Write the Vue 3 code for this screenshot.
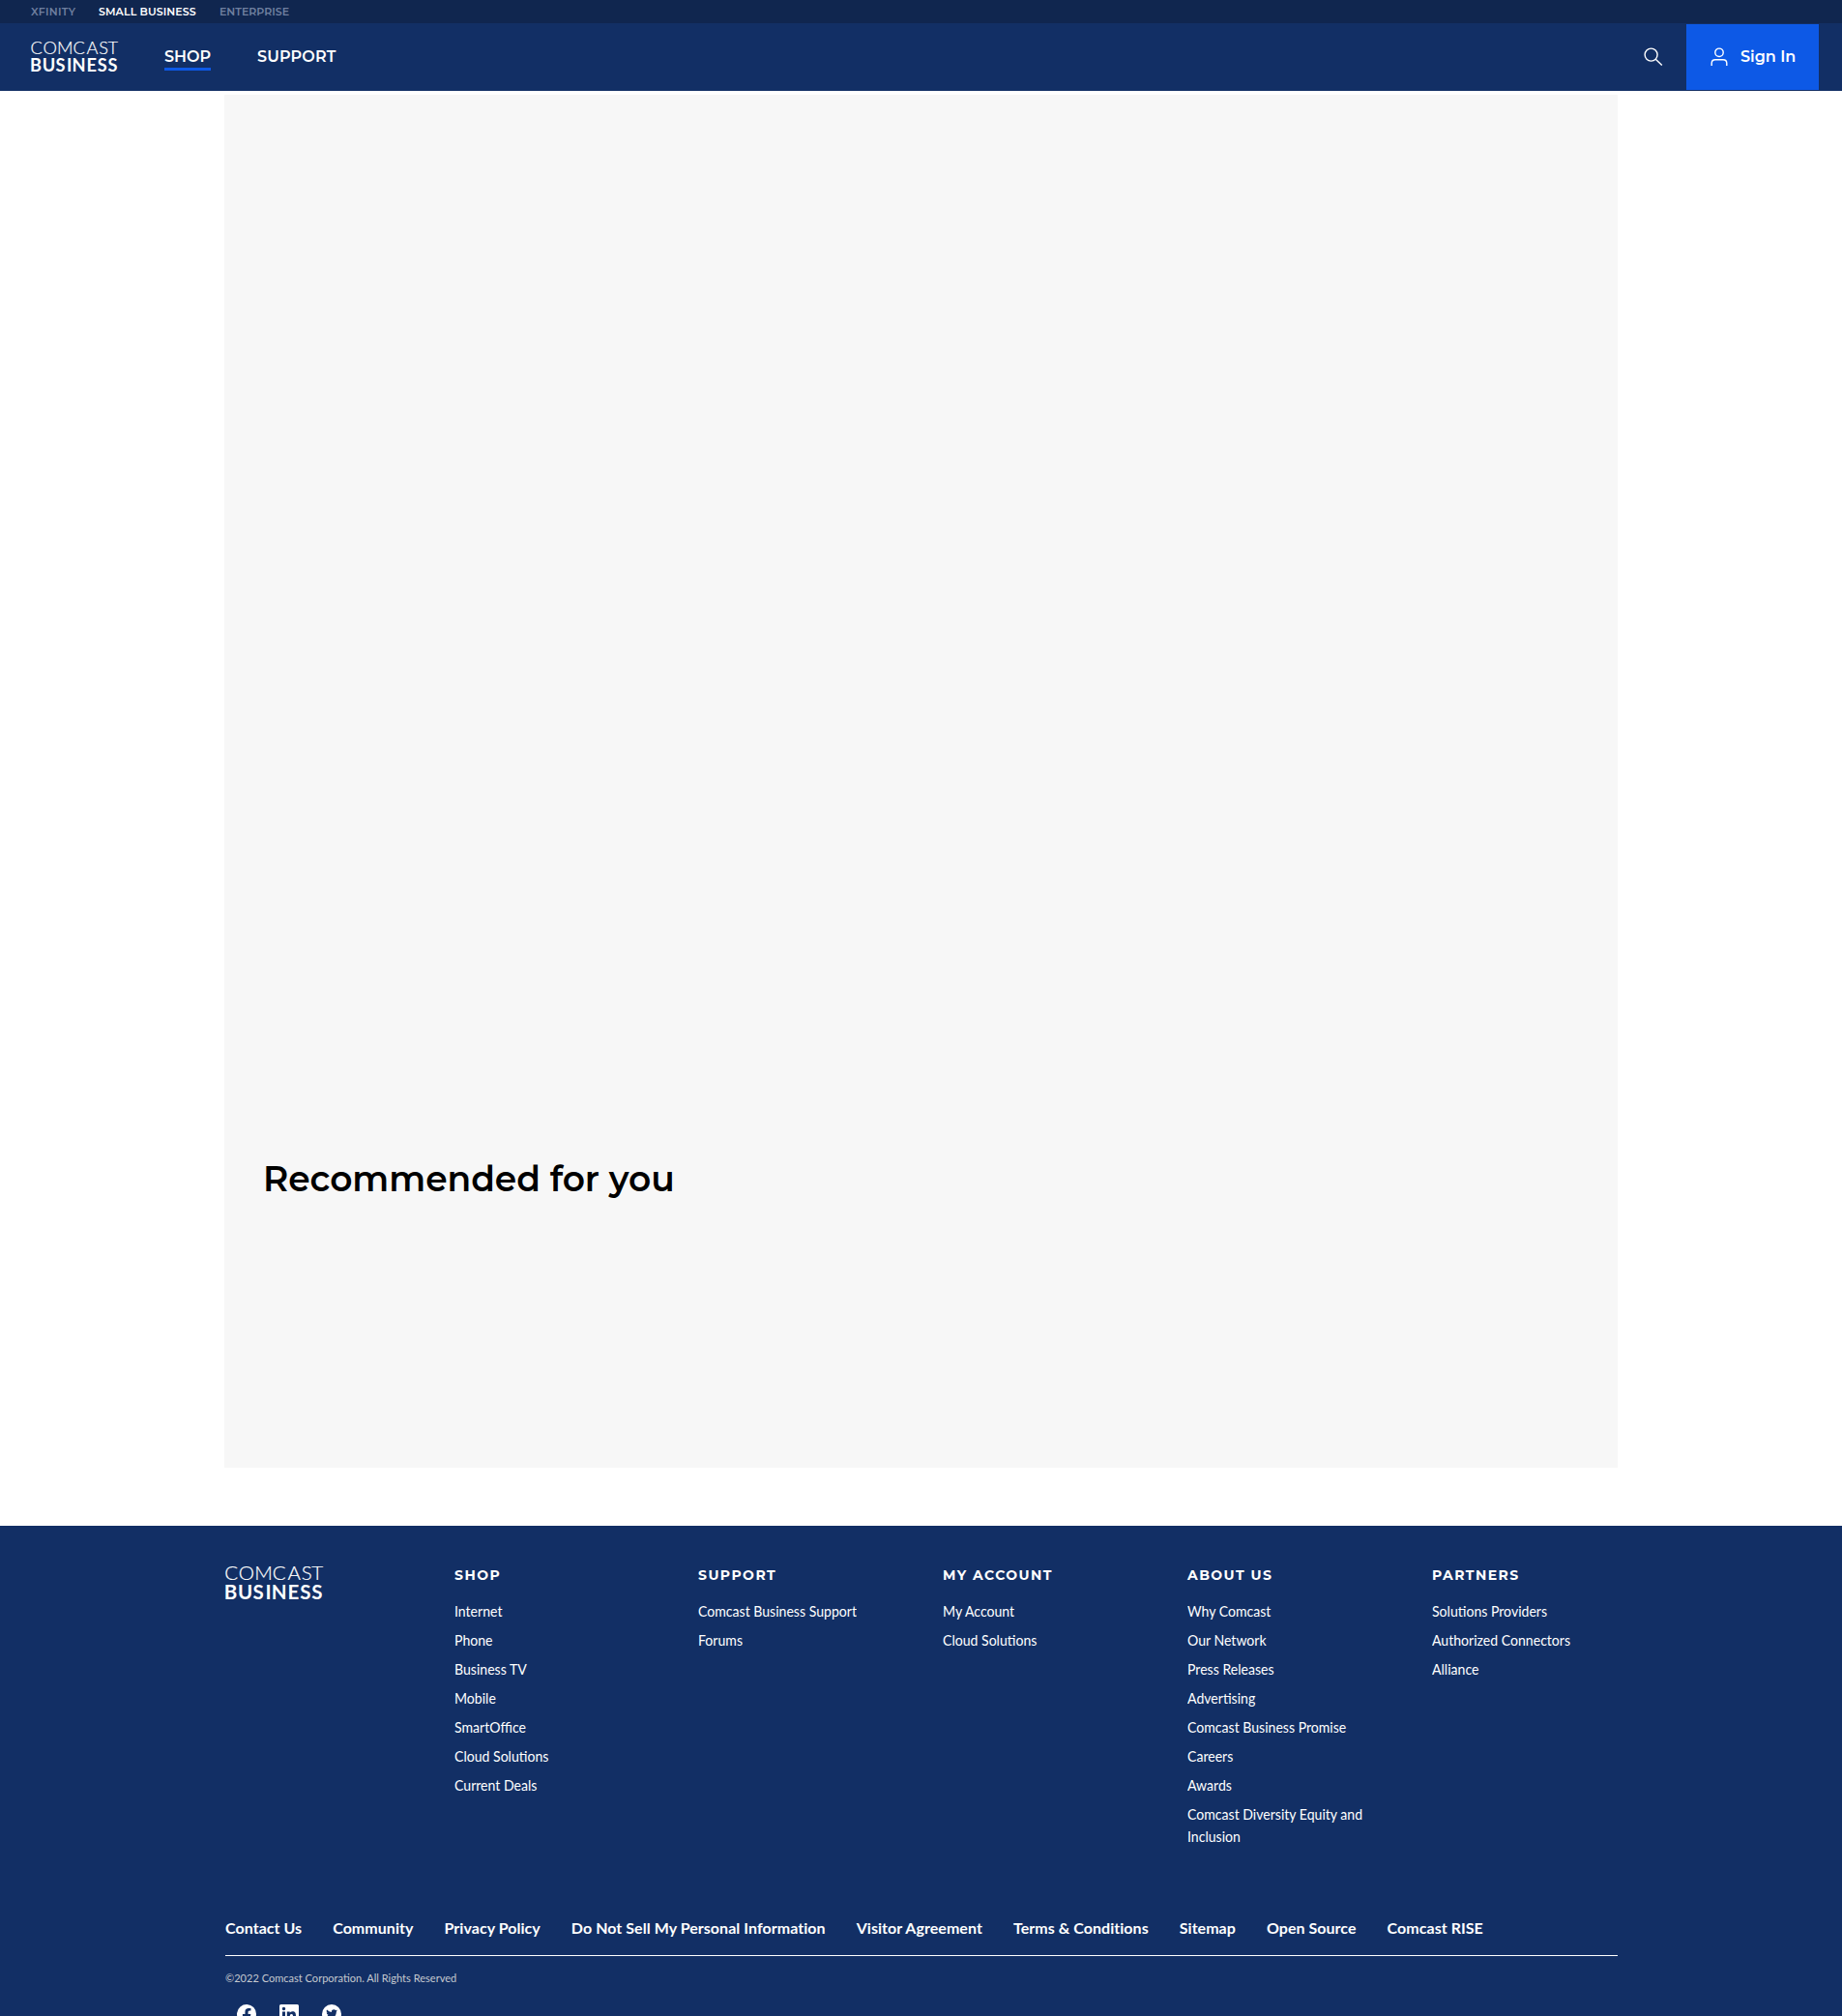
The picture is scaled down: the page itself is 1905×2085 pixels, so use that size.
<script setup>
const sites = [
  { label: 'XFINITY', cls: 's1' },
  { label: 'SMALL BUSINESS', cls: 's2 active' },
  { label: 'ENTERPRISE', cls: 's3' },
]
const columns = [
  { title: 'SHOP', links: ['Internet', 'Phone', 'Business TV', 'Mobile', 'SmartOffice', 'Cloud Solutions', 'Current Deals'] },
  { title: 'SUPPORT', links: ['Comcast Business Support', 'Forums'] },
  { title: 'MY ACCOUNT', links: ['My Account', 'Cloud Solutions'] },
  { title: 'ABOUT US', links: ['Why Comcast', 'Our Network', 'Press Releases', 'Advertising', 'Comcast Business Promise', 'Careers', 'Awards', 'Comcast Diversity Equity and Inclusion'] },
  { title: 'PARTNERS', links: ['Solutions Providers', 'Authorized Connectors', 'Alliance'] },
]
const legal = ['Contact Us', 'Community', 'Privacy Policy', 'Do Not Sell My Personal Information', 'Visitor Agreement', 'Terms & Conditions', 'Sitemap', 'Open Source', 'Comcast RISE']
</script>

<template>
  <div class="page">
    <div class="topbar">
      <a v-for="s in sites" :key="s.label" :class="s.cls">{{ s.label }}</a>
    </div>
    <header class="nav">
      <svg class="logo" viewBox="0 0 101 36" width="90" height="32">
        <text x="-0.8 13.8 30.2 48.800 64.500 78.800 89.200" y="15" class="thin">COMCAST</text>
        <text x="-1.2 13 28.600 41.600 47.800 64.600 77.300 89.200" y="35.2" class="bold">BUSINESS</text>
      </svg>
      <a class="item shop">SHOP</a>
      <a class="item support">SUPPORT</a>
      <svg class="search" viewBox="0 0 20 20" width="20" height="20">
        <circle cx="7.6" cy="7.6" r="6.5" />
        <path d="M12.3 12.3 18.8 18.6" />
      </svg>
      <a class="signin">
        <svg viewBox="0 0 18 20" width="18" height="20">
          <circle cx="9" cy="5.3" r="4.2" />
          <path d="M1.2 19v-2.600Q1.200 12.700 5 12.700h8q3.800 0 3.800 3.700V19" />
        </svg>
        <span>Sign In</span>
      </a>
    </header>
    <main class="content">
      <h2>Recommended for you</h2>
    </main>
    <footer class="footer">
      <div class="inner">
        <div class="columns">
          <svg class="logo" viewBox="0 0 101 36" width="101" height="36">
            <text x="-0.8 13.8 30.2 48.800 64.500 78.800 89.200" y="15" class="thin">COMCAST</text>
            <text x="-1.2 13 28.600 41.600 47.800 64.600 77.300 89.200" y="35.2" class="bold">BUSINESS</text>
          </svg>
          <section v-for="c in columns" :key="c.title">
            <h3>{{ c.title }}</h3>
            <a v-for="l in c.links" :key="l">{{ l }}</a>
          </section>
        </div>
        <nav class="legal">
          <a v-for="l in legal" :key="l">{{ l }}</a>
        </nav>
        <p class="copy">©2022 Comcast Corporation. All Rights Reserved</p>
        <div class="social">
          <svg viewBox="0 0 20 20" width="20" height="20">
            <path d="M20 10a10 10 0 1 0-11.56 9.88v-7H5.9V10h2.54V7.8c0-2.5 1.5-3.9 3.78-3.9 1.1 0 2.24.2 2.24.2v2.46H13.2c-1.24 0-1.63.77-1.63 1.56V10h2.77l-.44 2.9h-2.33v7A10 10 0 0 0 20 10Z" />
          </svg>
          <svg viewBox="0 0 20 20" width="20" height="20">
            <path fill-rule="evenodd" d="M1.5 0h17A1.5 1.5 0 0 1 20 1.5v17a1.5 1.5 0 0 1-1.5 1.5h-17A1.5 1.5 0 0 1 0 18.5v-17A1.5 1.5 0 0 1 1.5 0ZM3 7.5V17h3V7.5ZM4.5 2.75a1.73 1.73 0 1 0 0 3.46 1.73 1.73 0 0 0 0-3.46ZM7.8 7.5V17h3v-4.7c0-1.3.3-2.4 1.75-2.4S14 11.2 14 12.4V17h3v-5.2c0-2.6-.6-4.5-3.6-4.5-1.4 0-2.3.8-2.7 1.5V7.5Z" />
          </svg>
          <svg viewBox="0 0 20 20" width="20" height="20">
            <path fill-rule="evenodd" d="M10 0a10 10 0 1 0 0 20 10 10 0 0 0 0-20ZM14.8 7.6v.3c0 3.2-2.4 6.8-6.8 6.8-1.4 0-2.6-.4-3.7-1.1 1.3.1 2.5-.2 3.5-1a2.4 2.4 0 0 1-2.2-1.7h1.1a2.4 2.4 0 0 1-2-2.4l1.1.3a2.4 2.4 0 0 1-.7-3.2 6.8 6.8 0 0 0 4.9 2.5c-.4-1.7.8-2.9 2.3-2.9.7 0 1.3.3 1.7.8.5-.1 1.1-.3 1.5-.6-.2.6-.5 1-1 1.3.4 0 .9-.2 1.4-.4-.3.5-.7.9-1.1 1.3Z" />
          </svg>
        </div>
      </div>
    </footer>
  </div>
</template>

<style>
body { margin: 0; background: #fff; }
</style>

<style scoped>
.page {
  height: 2085px;
  overflow: hidden;
  font-family: Montserrat, Inter, sans-serif;
  color: #fff;
}
.topbar {
  height: 24px;
  box-sizing: border-box;
  padding-left: 32px;
  display: flex;
  background: #10264f;
  font-size: 11px;
  font-weight: 600;
  line-height: 24px;
  color: #6f7f9f;
  white-space: nowrap;
}
.s1 { width: 70px; letter-spacing: 0.3px; }
.s2 { width: 125px; letter-spacing: 0.1px; }
.s3 { letter-spacing: 0; }
.active { color: #fff; }
.nav {
  height: 70px;
  box-sizing: border-box;
  padding: 0 24px 0 32px;
  display: flex;
  align-items: center;
  background: #122f65;
}
.logo { display: block; overflow: visible; fill: #fff; font-family: Lato, sans-serif; }
.thin { font-size: 20.5px; font-weight: 300; stroke: #fff; stroke-width: 0.2; }
.bold { font-size: 20.5px; font-weight: 700; }
.item {
  font-size: 16px;
  font-weight: 600;
  line-height: 20px;
  height: 24px;
  border-bottom: 3px solid transparent;
  margin-bottom: -3px;
  white-space: nowrap;
  box-sizing: border-box;
}
.shop { width: 48px; margin-left: 48px; border-color: #0d59e6; }
.support { margin-left: 48px; letter-spacing: 0.15px; }
.search { margin-left: auto; margin-right: 24px; }
.search, .signin svg { fill: none; stroke: #fff; stroke-width: 1.4; }
.signin {
  width: 137px;
  height: 68px;
  box-sizing: border-box;
  padding-left: 25px;
  display: flex;
  align-items: center;
  gap: 13px;
  background: #0d59e6;
  font-size: 16px;
  line-height: 20px;
  font-weight: 600;
  white-space: nowrap;
}
.content {
  width: 1441px;
  height: 1420px;
  margin: 4px auto 60px;
  background: #f7f7f7;
  overflow: hidden;
}
h2 {
  margin: 1097px 0 0 40px;
  font-size: 36px;
  line-height: 48px;
  font-weight: 600;
  letter-spacing: -0.05px;
  color: #000;
}
.footer { height: 520px; background: #122f65; }
.inner { width: 1440px; margin: 0 auto; padding: 41px 0 0 1px; }
.columns {
  display: grid;
  grid-template-columns: 237px 252px 253px 253px 253px 192px;
  height: 365px;
}
section {
  display: flex;
  flex-direction: column;
  align-items: flex-start;
  gap: 8px;
}
h3 {
  margin: 0 0 9px;
  font-size: 14px;
  line-height: 20px;
  font-weight: 700;
  letter-spacing: 1.45px;
  white-space: nowrap;
}
section a {
  font: 400 14.08px/22px Lato, sans-serif;
  max-width: 190px;
  transform: scaleY(1.06);
}
.legal {
  display: flex;
  gap: 32px;
  height: 38px;
  border-bottom: 1px solid #fff;
  font: 700 16px/20px Lato, sans-serif;
  letter-spacing: 0.045px;
  white-space: nowrap;
}
.copy {
  margin: 13px 0 0;
  font: 400 11.05px/20px Lato, sans-serif;
  color: #c5c9cf;
}
.social { display: flex; gap: 24px; padding: 17px 0 0 12px; fill: #fff; }
</style>
